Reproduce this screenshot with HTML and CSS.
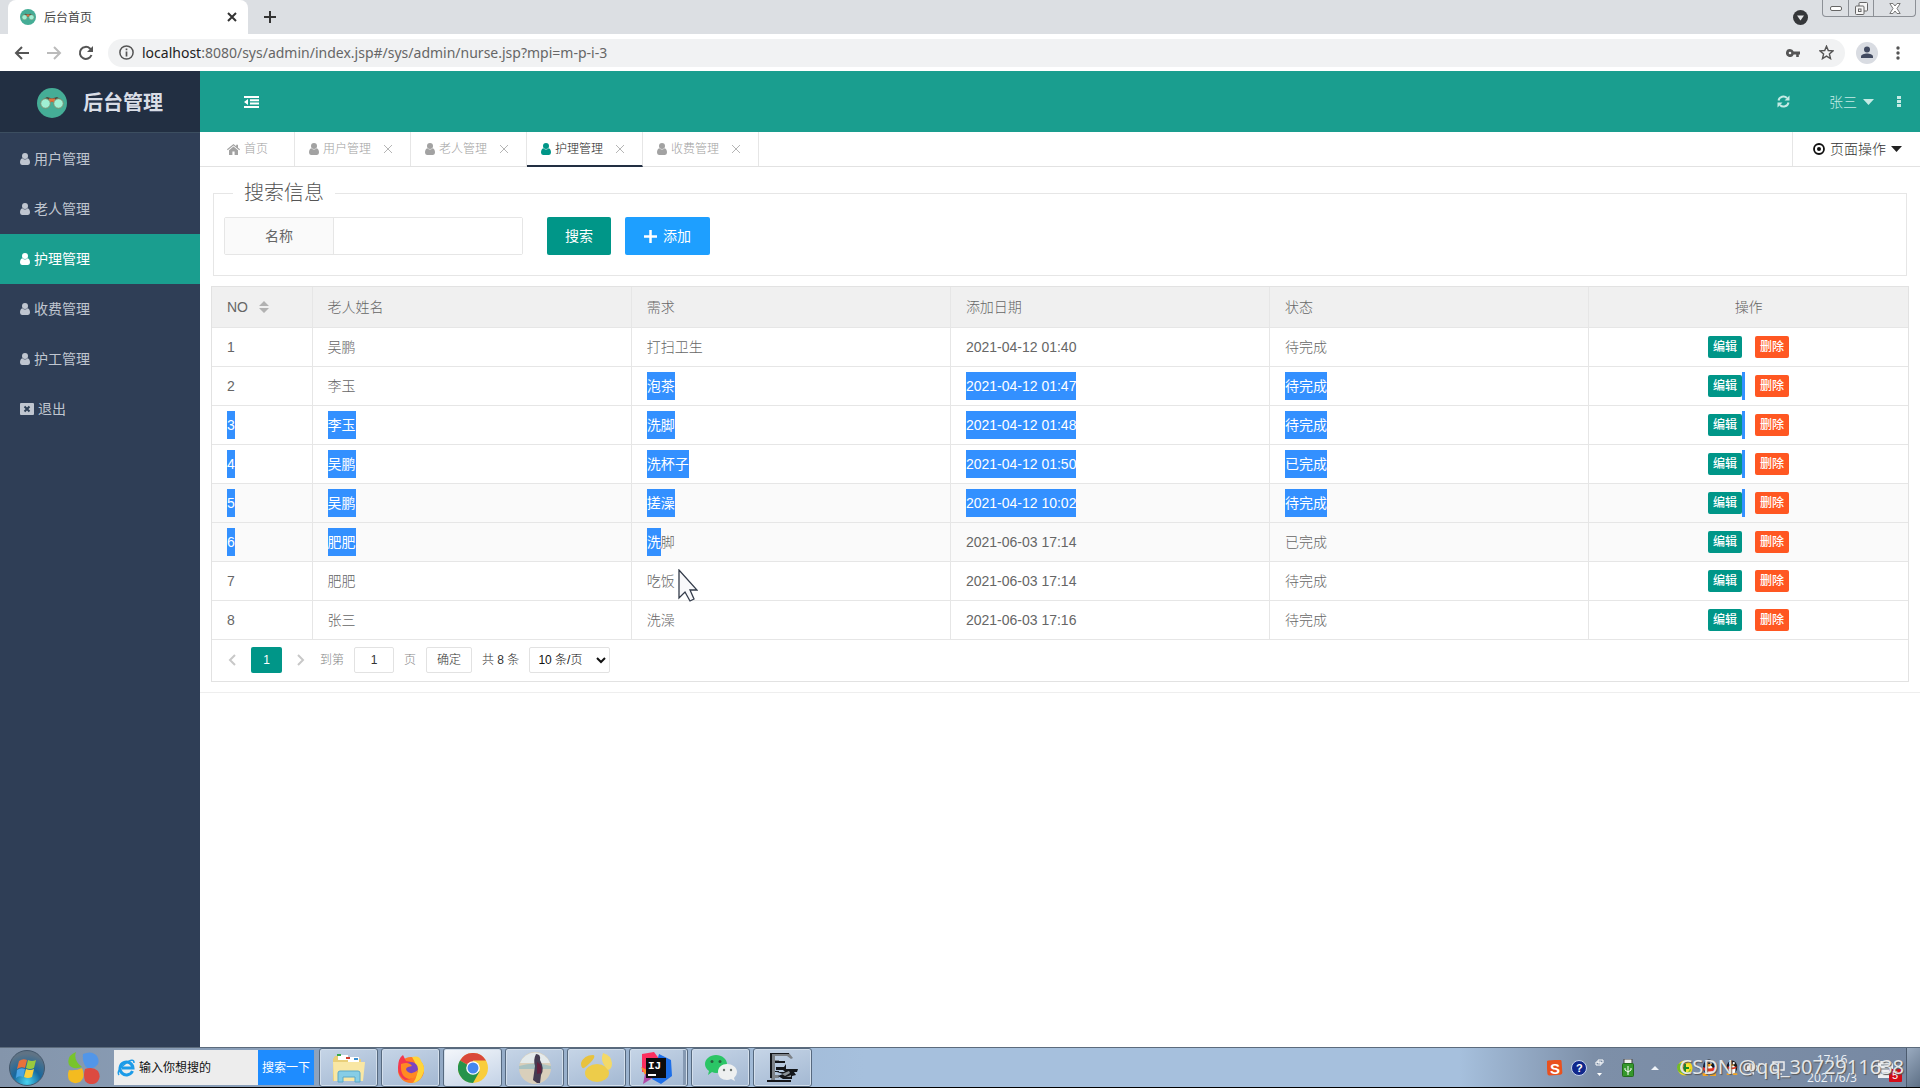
FILE: index.html
```html
<!DOCTYPE html>
<html lang="zh-CN">
<head>
<meta charset="utf-8">
<title>后台首页</title>
<link rel="stylesheet" href="styles.css">
</head>
<body>
<svg class="defs" aria-hidden="true">
  <symbol id="user" viewBox="0 0 10 12"><circle cx="5" cy="3" r="3"/><path d="M2.4 5.2Q5 7.6 7.6 5.2Q10 5.8 10 9.6Q10 12 8 12H2Q0 12 0 9.6Q0 5.8 2.4 5.2z"/></symbol>
  <symbol id="home" viewBox="0 0 13 11"><path d="M6.5 0 9.2 2.2V.8H11V3.700L13 5.300 12.300 6.200 6.500 1.500.7 6.200 0 5.300z"/><path d="M6.500 2.600 11 6.200V11H7.600V7.600H5.400V11H2V6.200z"/></symbol>
  <symbol id="logo" viewBox="0 0 30 30"><circle cx="15" cy="15" r="15" fill="#45ad96"/><path d="M5 12 10 9 15 10.500 20 9 25 12 20 14H10z" fill="#4a4a3e"/><path d="M12 10.500h6v5l-3-2-3 2z" fill="#e0713c"/><circle cx="8.500" cy="15.500" r="4.800" fill="#a0f0d4" stroke="#7d8f70"/><circle cx="21.500" cy="15.500" r="4.800" fill="#a0f0d4" stroke="#7d8f70"/></symbol>
  <symbol id="x" viewBox="0 0 10 10"><path d="M1 1 9 9M9 1 1 9" fill="none" stroke="currentColor"/></symbol>
</svg>

<div class="tabstrip">
  <div class="browser-tab">
    <svg class="favicon"><use href="#logo"/></svg>
    <span class="browser-title">后台首页</span>
    <button class="plain" aria-label="关闭标签页"><svg class="i10 thick"><use href="#x"/></svg></button>
  </div>
  <button class="plain newtab" aria-label="新标签页"><svg width="12" height="12" viewBox="0 0 12 12"><path d="M6 0V12M0 6H12" stroke="#333" stroke-width="2"/></svg></button>
  <span class="grow"></span>
  <svg class="tab-search" width="15" height="15" viewBox="0 0 15 15"><circle cx="7.500" cy="7.500" r="7.500" fill="#35373a"/><path d="M4 5.500h7L7.500 10.500z" fill="#e4e6e8"/></svg>
  <div class="window-buttons">
    <button class="plain" aria-label="最小化"><svg width="12" height="5" viewBox="0 0 12 5"><rect x=".5" y=".5" width="11" height="4" rx="1.500" fill="#fff" stroke="#666"/></svg></button>
    <button class="plain" aria-label="还原"><svg width="13" height="13" viewBox="0 0 13 13" fill="#f5f5f5" stroke="#666"><rect x="4" y=".5" width="8.500" height="8.500" rx="1"/><rect x=".5" y="4" width="8.500" height="8.500" rx="1"/><rect x="3.500" y="7" width="2.500" height="2.500"/></svg></button>
    <button class="plain wide" aria-label="关闭"><svg width="12" height="11" viewBox="0 0 12 11"><path d="M.8.500H4L6 3 8 .500h3.200L8 5.500l3.200 5H8L6 8l-2 2.500H.8L4 5.500z" fill="#fff" stroke="#777"/></svg></button>
  </div>
</div>

<div class="toolbar">
  <button class="plain" aria-label="后退"><svg width="16" height="14" viewBox="0 0 16 14"><path d="M8 1 2 7l6 6M2 7h13" fill="none" stroke="#555" stroke-width="2"/></svg></button>
  <button class="plain" aria-label="前进"><svg width="16" height="14" viewBox="0 0 16 14"><path d="M8 1l6 6-6 6M14 7H1" fill="none" stroke="#bbb" stroke-width="2"/></svg></button>
  <button class="plain" aria-label="刷新"><svg width="16" height="16" viewBox="0 0 16 16"><path d="M13.500 10A6 6 0 1 1 12 3.500L14 6" fill="none" stroke="#555" stroke-width="2"/><path d="M15 1v6H9z" fill="#555"/></svg></button>
  <div class="address">
    <svg width="15" height="15" viewBox="0 0 15 15"><circle cx="7.500" cy="7.500" r="6.600" fill="none" stroke="#555" stroke-width="1.500"/><path d="M7.500 6.500V11.500M7.500 3.500V5.200" stroke="#555" stroke-width="1.700"/></svg>
    <span class="url"><b>localhost</b>:8080/sys/admin/index.jsp#/sys/admin/nurse.jsp?mpi=m-p-i-3</span>
    <svg width="14" height="8" viewBox="0 0 14 8"><path fill="#555" fill-rule="evenodd" d="M4 0a4 4 0 0 1 3.700 2.600H14v2.800h-1.200V8h-2.600V5.400H7.700A4 4 0 1 1 4 0zM4 2.700a1.300 1.300 0 1 0 0 2.600 1.300 1.300 0 0 0 0-2.600z"/></svg>
    <svg class="star" width="15" height="15" viewBox="0 0 15 15"><path d="M7.500 1.200 9.300 5.500 14 5.900 10.400 9l1.100 4.600-4-2.500-4 2.500L4.600 9 1 5.900l4.700-.4z" fill="none" stroke="#555" stroke-width="1.400"/></svg>
  </div>
  <svg class="avatar" width="22" height="22" viewBox="0 0 22 22"><circle cx="11" cy="11" r="11" fill="#d9dce2"/><circle cx="11" cy="7.500" r="3" fill="#424a60"/><path d="M5 16v-1.500c0-2 3.500-3 6-3s6 1 6 3V16z" fill="#424a60"/></svg>
  <button class="plain" aria-label="菜单"><svg width="4" height="14" viewBox="0 0 4 14" fill="#555"><circle cx="2" cy="2" r="1.700"/><circle cx="2" cy="7" r="1.700"/><circle cx="2" cy="12" r="1.700"/></svg></button>
</div>

<div class="app">
  <aside class="sidebar">
    <div class="brand"><svg class="brand-logo"><use href="#logo"/></svg><span>后台管理</span></div>
    <nav>
      <a href="#user"><svg class="user"><use href="#user"/></svg>用户管理</a>
      <a href="#elder"><svg class="user"><use href="#user"/></svg>老人管理</a>
      <a href="#nurse" class="active"><svg class="user"><use href="#user"/></svg>护理管理</a>
      <a href="#fee"><svg class="user"><use href="#user"/></svg>收费管理</a>
      <a href="#worker"><svg class="user"><use href="#user"/></svg>护工管理</a>
      <a href="#exit"><svg class="exit" viewBox="0 0 14 12"><rect width="14" height="12" rx="1" fill="currentColor"/><path d="M4.500 3.500l5 5M9.500 3.500l-5 5" stroke="#2f4056" stroke-width="2"/></svg>退出</a>
    </nav>
  </aside>

  <main>
    <header class="topbar">
      <button class="plain" aria-label="收起菜单"><svg width="15" height="12" viewBox="0 0 15 12" fill="#fff"><path d="M0 0h15v2H0zM6 3.300h9v2H6zM6 6.600h9v2H6zM0 10h15v2H0zM4 3v6L0 6z"/></svg></button>
      <span class="grow"></span>
      <button class="plain" aria-label="刷新页面"><svg width="13" height="13" viewBox="0 0 13 13"><path d="M1.500 5.500A5 5 0 0 1 10 3M11.500 7.500A5 5 0 0 1 3 10" fill="none" stroke="#c5ebe5" stroke-width="2"/><path d="M12.500.5v5h-5zM.5 12.500v-5h5z" fill="#c5ebe5"/></svg></button>
      <button class="plain account">张三<svg width="11" height="6" viewBox="0 0 11 6"><path d="M0 0h11L5.500 6z" fill="#c5ebe5"/></svg></button>
      <button class="plain" aria-label="更多"><svg width="4" height="11" viewBox="0 0 4 11" fill="#c5ebe5"><path d="M0 0h4v3H0zM0 4h4v3H0zM0 8h4v3H0z"/></svg></button>
    </header>

    <div class="pagetabs">
      <a href="#home" class="pagetab home"><svg class="homeicon"><use href="#home"/></svg>首页</a>
      <a href="#user" class="pagetab"><svg class="user"><use href="#user"/></svg>用户管理<svg class="i10 close"><use href="#x"/></svg></a>
      <a href="#elder" class="pagetab"><svg class="user"><use href="#user"/></svg>老人管理<svg class="i10 close"><use href="#x"/></svg></a>
      <a href="#nurse" class="pagetab current"><svg class="user"><use href="#user"/></svg>护理管理<svg class="i10 close"><use href="#x"/></svg></a>
      <a href="#fee" class="pagetab"><svg class="user"><use href="#user"/></svg>收费管理<svg class="i10 close"><use href="#x"/></svg></a>
      <span class="grow"></span>
      <button class="plain page-ops"><svg width="12" height="12" viewBox="0 0 12 12"><circle cx="6" cy="6" r="5" fill="none" stroke="#111" stroke-width="1.800"/><circle cx="6" cy="6" r="2" fill="#111"/></svg>页面操作<svg width="11" height="6" viewBox="0 0 11 6"><path d="M0 0h11L5.500 6z" fill="#222"/></svg></button>
    </div>

    <section class="card">
      <fieldset class="search">
        <legend>搜索信息</legend>
        <form class="search-row">
          <div class="field"><label for="name">名称</label><input id="name" type="text"></div>
          <button type="button" class="btn">搜索</button>
          <button type="button" class="btn blue"><svg width="13" height="13" viewBox="0 0 13 13"><path d="M6.500 0V13M0 6.500H13" stroke="#fff" stroke-width="2.500"/></svg>添加</button>
        </form>
      </fieldset>

      <div class="grid">
        <table>
          <thead><tr><th class="no">NO<svg class="sort" viewBox="0 0 10 12"><path d="M0 5h10L5 0zM0 7h10l-5 5z" fill="#b2b2b2"/></svg></th><th>老人姓名</th><th>需求</th><th>添加日期</th><th>状态</th><th class="ops">操作</th></tr></thead>
          <tbody>
            <tr><td>1</td><td>吴鹏</td><td>打扫卫生</td><td>2021-04-12 01:40</td><td>待完成</td><td class="ops"><button class="mini">编辑</button><button class="mini del">删除</button></td></tr>
            <tr><td>2</td><td>李玉</td><td><mark>泡茶</mark></td><td><mark>2021-04-12 01:47</mark></td><td><mark>待完成</mark></td><td class="ops"><button class="mini">编辑</button><i class="caret"></i><button class="mini del">删除</button></td></tr>
            <tr><td><mark>3</mark></td><td><mark>李玉</mark></td><td><mark>洗脚</mark></td><td><mark>2021-04-12 01:48</mark></td><td><mark>待完成</mark></td><td class="ops"><button class="mini">编辑</button><i class="caret"></i><button class="mini del">删除</button></td></tr>
            <tr><td><mark>4</mark></td><td><mark>吴鹏</mark></td><td><mark>洗杯子</mark></td><td><mark>2021-04-12 01:50</mark></td><td><mark>已完成</mark></td><td class="ops"><button class="mini">编辑</button><i class="caret"></i><button class="mini del">删除</button></td></tr>
            <tr class="faint"><td><mark>5</mark></td><td><mark>吴鹏</mark></td><td><mark>搓澡</mark></td><td><mark>2021-04-12 10:02</mark></td><td><mark>待完成</mark></td><td class="ops"><button class="mini">编辑</button><i class="caret"></i><button class="mini del">删除</button></td></tr>
            <tr class="faint"><td><mark>6</mark></td><td><mark>肥肥</mark></td><td><mark>洗</mark>脚</td><td>2021-06-03 17:14</td><td>已完成</td><td class="ops"><button class="mini">编辑</button><button class="mini del">删除</button></td></tr>
            <tr><td>7</td><td>肥肥</td><td><span class="pointed">吃饭<svg class="pointer" viewBox="0 0 20 33"><path d="M1 1v28l6-6 5 9 4-2-4-9h7z" fill="#f8f8fa" stroke="#333b4a" stroke-width="1.300"/></svg></span></td><td>2021-06-03 17:14</td><td>待完成</td><td class="ops"><button class="mini">编辑</button><button class="mini del">删除</button></td></tr>
            <tr><td>8</td><td>张三</td><td>洗澡</td><td>2021-06-03 17:16</td><td>待完成</td><td class="ops"><button class="mini">编辑</button><button class="mini del">删除</button></td></tr>
          </tbody>
        </table>
        <div class="pager">
          <button class="plain" aria-label="上一页"><svg width="8" height="12" viewBox="0 0 8 12"><path d="M7 1 2 6l5 5" fill="none" stroke="#c8c8c8" stroke-width="2"/></svg></button>
          <span class="page-now">1</span>
          <button class="plain" aria-label="下一页"><svg width="8" height="12" viewBox="0 0 8 12"><path d="M1 1l5 5-5 5" fill="none" stroke="#c8c8c8" stroke-width="2"/></svg></button>
          <label class="dim jump" for="goto">到第</label>
          <input id="goto" type="text" value="1">
          <span class="dim">页</span>
          <button class="confirm">确定</button>
          <span class="total">共 8 条</span>
          <select aria-label="每页条数"><option>10 条/页</option></select>
        </div>
      </div>
    </section>
  </main>
</div>

<footer class="taskbar">
  <button class="plain orb" aria-label="开始"><svg width="36" height="36" viewBox="0 0 36 36"><defs><radialGradient id="orbfill" cx=".5" cy=".9" r=".8"><stop offset="0" stop-color="#4ad4f0"/><stop offset=".5" stop-color="#17689e"/><stop offset="1" stop-color="#5f7385"/></radialGradient></defs><circle cx="18" cy="18" r="17.500" fill="url(#orbfill)" stroke="#45586c"/><path d="M10 11q4-3 8-1l-2 8q-4-2-8 1z" fill="#e8713a"/><path d="M19 10q4 2 8 0l-2 8q-4 2-8 0z" fill="#9ac93d"/><path d="M8 20q4-3 8-1l-2 8q-4-2-7 1z" fill="#4aa4e4"/><path d="M17 19q4 2 8 0l-2 8q-4 2-8 0z" fill="#fbd03e"/></svg></button>
  <svg class="balls" width="32" height="32" viewBox="0 0 32 32"><path d="M15 2q9-4 14 2 4 7-2 11-6 3-9 0-4-5-3-13z" fill="#5296e8"/><path d="M17 17q8-3 13 2 4 7-2 12-7 3-11-2-2-6 0-12z" fill="#dc4a40"/><path d="M8 0q-3 8 6 15-9 3-13-2Q-2 4 8 0z" fill="#78c42c"/><path d="M1 18q7 1 13-2 4 9-2 14-7 3-11-2-2-5 0-10z" fill="#f4bb20"/></svg>
  <form class="quick">
    <svg width="18" height="18" viewBox="0 0 18 18"><path d="M15.500 12A6.500 6.500 0 1 1 16 9H5" fill="none" stroke="#1c9be8" stroke-width="3"/><path d="M2 16Q-1 12 8 5T17 4" fill="none" stroke="#1c9be8" stroke-width="1.500"/></svg>
    <input type="text" value="输入你想搜的" aria-label="搜索内容">
    <button type="button">搜索一下</button>
  </form>
  <div class="tasks">
    <button class="task" aria-label="资源管理器"><svg width="34" height="30" viewBox="0 0 34 30"><path d="M3 3h9l2 3h15v22H1V6z" fill="#e9cf79"/><path d="M6 2h10v5H6zM16 4h11v5H16z" fill="#fff"/><path d="M5 1h4v2H5z" fill="#3aa84b"/><path d="M14 4h4v2h-4z" fill="#d04030"/><path d="M22 5h4v2h-4z" fill="#3a8fd0"/><path d="M1 9h32l-2 19H2z" fill="#f9e7a4"/><path d="M6 29V20q0-2 2-2h18q2 0 2 2v9h-5v-5H11v5z" fill="#86cde6" stroke="#5aa8c8"/></svg></button>
    <button class="task" aria-label="Firefox"><svg width="32" height="32" viewBox="0 0 32 32"><circle cx="16" cy="18" r="13" fill="#ff7a26"/><path d="M17 5q8-2 9 4 5 6 2 13-3 8-10 9 6-8 3-16-1-6-4-10z" fill="#ffd43a"/><path d="M3 16Q3 6 8 3l3 6q8 0 11 7 0 12-12 12Q3 24 3 16z" fill="#f4384e"/><circle cx="16" cy="17" r="7" fill="#7b45c0"/><path d="M6 12q8-3 11 2l-4 1q-4 2 0 5 4 3 10-2-1 9-9 9-9-2-8-15z" fill="#ff8a22"/></svg></button>
    <button class="task lit" aria-label="Chrome"><svg width="30" height="30" viewBox="0 0 30 30"><circle cx="15" cy="15" r="15" fill="#f9cd3b"/><path d="M15 15 2 7.500A15 15 0 0 1 28 7.500H15z" fill="#d9483b"/><path d="M15 15 2 7.500A15 15 0 0 0 15 30l6.500-11.500z" fill="#25934b"/><circle cx="15" cy="15" r="6.800" fill="#fff"/><circle cx="15" cy="15" r="5.500" fill="#4587f0"/></svg></button>
    <button class="task" aria-label="照片"><svg width="32" height="32" viewBox="0 0 32 32"><circle cx="16" cy="16" r="16" fill="#d9cfbb"/><path d="M1 11a16 16 0 0 1 30 0z" fill="#e4eaeb"/><path d="M0 14q16-5 32 0v3H0z" fill="#a9c2c1"/><path d="M17 2q5 0 4 6 5 9 1 15l-1 8h-3l-4-3 2-14q-2-6 1-12z" fill="#443b50"/><path d="M18 10q6 3 4 11l-4 1z" fill="#62213e"/></svg></button>
    <button class="task" aria-label="Navicat"><svg width="32" height="30" viewBox="0 0 32 30"><ellipse cx="16" cy="20" rx="12" ry="9" fill="#edcc4a"/><path d="M0 10Q3 2 12 2q2 0 1 3-3 5-10 10Q0 16 0 10z" fill="#e8c23e"/><path d="M22 0q8 2 9 10 0 6-4 7-7-7-6-13z" fill="#f3d968"/></svg></button>
    <button class="task stacked" aria-label="IntelliJ IDEA"><svg width="32" height="32" viewBox="0 0 32 32"><path d="M2 2 14 0l6 8-4 12H2z" fill="#fb3060"/><path d="M19 2 31 8l1 16-11 8-9-5z" fill="#1e6fe8"/><path d="M1 15l8 4-2 8z" fill="#fb8c28"/><path d="M5 22h14L3 32z" fill="#b24aa8"/><path d="M6 6h20v20H6z" fill="#0c0c0e"/><text x="8" y="17" class="ij">IJ</text><path d="M8 22h8v2H8z" fill="#fff"/></svg></button>
    <button class="task" aria-label="微信"><svg width="32" height="28" viewBox="0 0 32 28"><path d="M11 1c6 0 11 4 11 9s-5 9-11 9q-2 0-4-1l-4 3 1-4q-4-3-4-7c0-5 5-9 11-9z" fill="#2bc566"/><path d="M22 10c5 0 10 3 10 8q0 3-3 6l1 3-4-2q-2 1-4 1c-5 0-9-3-9-8s4-8 9-8z" fill="#eef0f0"/><g fill="#26623e"><circle cx="7" cy="7.500" r="1.500"/><circle cx="15" cy="7.500" r="1.500"/></g><g fill="#6b7370"><circle cx="19" cy="16" r="1.200"/><circle cx="26" cy="16" r="1.200"/></g></svg></button>
    <button class="task" aria-label="录屏"><svg width="32" height="30" viewBox="0 0 32 30"><path d="M3 0h19l4 5-2 1-4-3H8v4h4v3H8v12h4v3H8v2h15v2H0v-2h4z" fill="#7d8288"/><path d="M3 1h2v24H3zM3 0h19v1H3zM8 8h10v2H8zM8 18h4v1H8zM0 27h24v2H0z" fill="#14161a"/><path d="M9 14h8l2-3v5h12l-1 3h-3l2 3-4 1v3h-9l-5-3 5-2-6-2h8l-2-2H9z" fill="#14161a"/><path d="M15 21l7-3 1 2-5 3zM19 24l5-2v2z" fill="#8b9298"/></svg></button>
  </div>
  <span class="grow"></span>
  <div class="tray">
    <svg width="16" height="16" viewBox="0 0 16 16"><rect width="15" height="15" rx="2" fill="#e9511f" transform="rotate(-4 8 8)"/><text x="3" y="14" class="sogou">S</text></svg>
    <svg width="16" height="16" viewBox="0 0 16 16"><circle cx="8" cy="8" r="7.500" fill="#10278c" stroke="#c7d4ea"/><text x="5" y="12" class="help">?</text></svg>
    <svg width="9" height="18" viewBox="0 0 9 18"><path d="M3 1h5v3H3zM1 3h5v3H1z" fill="#7789a3" stroke="#fff"/><path d="M2 14h5l-2.500 3z" fill="#fff"/></svg>
    <svg class="usb" width="12" height="18" viewBox="0 0 12 18"><rect x="2" width="8" height="5" fill="#eee" stroke="#444"/><rect x=".5" y="4.500" width="11" height="13" rx="1" fill="#35982c" stroke="#236b1e"/><path d="M6 7v9M3 9v2l3 2 3-2V9" fill="none" stroke="#fff"/></svg>
    <svg class="up" width="8" height="4" viewBox="0 0 8 4"><path d="M0 4h8L4 0z" fill="#eef2f7"/></svg>
    <svg width="16" height="16" viewBox="0 0 16 16"><circle cx="8" cy="8" r="7.500" fill="#f3d51e"/><path d="M2 12a7 7 0 0 1-1-8L8 2l6 8-4 5z" fill="#72bc28"/><circle cx="8" cy="8" r="5" fill="#f7e537"/><path d="M8 4v8M4 8h8" stroke="#168b25" stroke-width="2"/></svg>
    <svg width="16" height="17" viewBox="0 0 16 17"><ellipse cx="8" cy="8" rx="6" ry="7.500" fill="#181818"/><ellipse cx="8" cy="11" rx="4" ry="5" fill="#fff"/><path d="M2 8q6 3 12 0l1 3q-7 3-13 0z" fill="#e5361d"/><path d="M5 5h6L8 8zM1 14h6v3H2zM9 14h6v3H9z" fill="#f5a623"/><circle cx="6" cy="3.500" r="1.300" fill="#fff"/><circle cx="10" cy="3.500" r="1.300" fill="#fff"/></svg>
    <svg width="14" height="17" viewBox="0 0 16 17"><ellipse cx="8" cy="8" rx="6" ry="7.500" fill="#181818"/><ellipse cx="8" cy="11" rx="4" ry="5" fill="#fff"/><path d="M3 7q5 3 10 0v2q-5 3-10 0z" fill="#e5361d"/><path d="M5 5h6L8 7zM2 15h5v2H2zM9 15h5v2H9z" fill="#f5a623"/><circle cx="6" cy="3.500" r="1.300" fill="#fff"/><circle cx="10" cy="3.500" r="1.300" fill="#fff"/></svg>
    <svg width="16" height="14" viewBox="0 0 16 14"><path d="M0 4h3l4-4v14l-4-4H0z" fill="#eee"/><path d="M9 4q2 3 0 6M12 2q3 5 0 10" fill="none" stroke="#eee"/></svg>
    <svg width="14" height="16" viewBox="0 0 14 16"><path d="M2 2h11v8H2zM7 10v4M4 14h7" fill="none" stroke="#eee" stroke-width="1.500"/></svg>
    <div class="clock"><span>17:16</span><span>2021/6/3</span></div>
    <svg class="note" width="25" height="25" viewBox="0 0 25 25"><path d="M1 3h12l3 3v14H1z" fill="#eef0f2"/><path d="M4 7h8M4 11h9M4 15h9" stroke="#6c7682"/><rect x="12" y="11" width="13" height="13" rx="1" fill="#d20d18"/><text x="15" y="21" class="badge">5</text></svg>
    <button class="plain show-desktop" aria-label="显示桌面"></button>
    <span class="watermark">CSDN @qq_3072911638</span>
  </div>
</footer>
</body>
</html>
```
FILE: styles.css
```css
* { box-sizing: border-box; }
html, body { height: 100%; }
body {
  margin: 0;
  display: flex;
  flex-direction: column;
  font: 14px/20px "Liberation Sans", "Noto Sans CJK SC", sans-serif;
  color: #666;
  background: #fff;
}
button, input, select { font: inherit; color: inherit; }
svg { display: block; flex: none; }
a { color: inherit; text-decoration: none; }
.defs { position: absolute; width: 0; height: 0; }
.grow { flex: 1; }
.plain { border: 0; padding: 0; background: none; display: flex; align-items: center; justify-content: center; }
.i10 { width: 10px; height: 10px; }
.thick { stroke-width: 2px; color: #333; }
.user { width: 10px; height: 12px; fill: currentColor; }

/* browser frame */
.tabstrip { flex: none; height: 34px; display: flex; align-items: center; background: #dcdfe3; padding-left: 8px; }
.browser-tab { width: 240px; height: 34px; display: flex; align-items: center; padding: 0 11px 0 12px; background: #fff; border-radius: 8px 8px 0 0; }
.favicon { width: 16px; height: 16px; }
.browser-title { flex: 1; margin-left: 8px; padding-top: 2px; font-size: 12px; color: #444; }
.newtab { margin-left: 16px; }
.tab-search { margin-right: 14px; }
.window-buttons { align-self: flex-start; display: flex; height: 17px; margin-right: 4px; border: 1px solid #8c9096; border-top: 0; border-radius: 0 0 4px 4px; }
.window-buttons button { width: 25px; }
.window-buttons button + button { border-left: 1px solid #8c9096; }
.window-buttons .wide { width: 42px; }
.toolbar { flex: none; height: 37px; display: flex; align-items: center; gap: 16px; padding: 0 20px 0 14px; background: #fff; }
.address { flex: 1; height: 28px; display: flex; align-items: center; gap: 8px; margin: 0 -5px 0 -2px; padding: 0 11px; border-radius: 14px; background: #f1f2f3; }
.url { flex: 1; font: 14px/20px "Noto Sans", "Open Sans", sans-serif; color: #666; }
.url b { font-weight: 400; color: #222; }
.star { margin-left: 11px; }
.avatar { margin-right: 2px; }

/* application */
.app { flex: 1; min-height: 0; display: flex; }
.sidebar { flex: none; width: 200px; background: #2f3e56; color: #c0c6d0; }
.brand { height: 62px; display: flex; align-items: center; gap: 16px; padding: 2px 0 0 37px; background: #222f42; border-bottom: 1px solid #3c4e60; font-size: 20px; font-weight: 700; color: #d9dde6; }
.brand-logo { width: 30px; height: 30px; }
.sidebar nav { padding-top: 1px; }
.sidebar nav a { height: 50px; display: flex; align-items: center; gap: 4px; padding-left: 20px; }
.sidebar nav .active { background: #1a9e8f; color: #fff; }
.exit { width: 14px; height: 12px; }
main { flex: 1; min-width: 0; }
.topbar { height: 61px; display: flex; align-items: center; padding: 0 19px 0 44px; background: #1a9e8f; color: #c5ebe5; }
.account { gap: 6px; margin: 0 23px 0 39px; font-weight: 300; }
.pagetabs { height: 35px; display: flex; border-bottom: 1px solid #e2e2e2; font-size: 12px; color: #a2a2a2; }
.pagetab { box-sizing: content-box; width: 101px; display: flex; align-items: center; gap: 4px; padding-left: 14px; border-right: 1px solid #e6e6e6; font-weight: 300; }
.home { width: 67px; padding-left: 27px; }
.homeicon { width: 13px; height: 11px; fill: currentColor; }
.close { margin-left: 8px; color: #b5b5b5; }
.current { color: #222; border-bottom: 2px solid #222f42; margin-bottom: -1px; }
.current .user { fill: #009688; }
.page-ops { gap: 5px; padding: 0 18px 0 20px; border-left: 1px solid #e6e6e6; font-size: 14px; font-weight: 300; color: #333; }
.card { padding: 14px 11px 10px; border-bottom: 1px solid #eee; }
.search { margin: 0 2px 10px; padding: 12px 10px 20px; border: 1px solid #e6e6e6; min-width: 0; }
.search legend { margin-left: 9px; padding: 0 11px; font-size: 20px; line-height: 24px; font-weight: 300; color: #555; }
.search-row { display: flex; align-items: center; }
.field { display: flex; width: 299px; height: 38px; margin-right: 24px; border: 1px solid #e6e6e6; border-radius: 2px; }
.field label { width: 109px; line-height: 36px; text-align: center; background: #fafafa; border-right: 1px solid #e6e6e6; }
.field input { flex: 1; min-width: 0; border: 0; padding: 0 10px; outline: 0; }
.btn { height: 38px; display: flex; align-items: center; gap: 6px; padding: 0 18px; margin-right: 14px; border: 0; border-radius: 2px; background: #009688; color: #fff; }
.blue { padding: 0 19px; background: #1e9fff; }
.grid { border: 1px solid #e2e2e2; }
table { width: 100%; border-collapse: collapse; table-layout: fixed; }
th, td { height: 39px; padding: 0 0 0 15px; text-align: left; font-weight: 300; border-right: 1px solid #e6e6e6; border-bottom: 1px solid #e6e6e6; }
th { height: 40px; background: #f0f0f0; }
th:last-child, td:last-child { border-right: 0; }
.no { width: 100px; font-weight: 400; }
.sort { display: inline-block; width: 10px; height: 12px; margin-left: 11px; vertical-align: -1px; }
.faint td { background: #fafafa; }
mark { display: inline-block; line-height: 28px; background: #3390ff; color: #fff; font-weight: 400; }
.ops { padding: 0; text-align: center; }
td.ops { font-size: 0; }
.mini { width: 34px; height: 22px; padding: 0; border: 0; border-radius: 2px; background: #009688; color: #fff; font-size: 12px; font-weight: 500; vertical-align: middle; }
.del { margin-left: 13px; background: #ff5722; }
.caret { display: inline-block; width: 3px; height: 28px; margin-right: -3px; background: #3390ff; vertical-align: middle; }
.pointed { position: relative; }
.pointer { position: absolute; left: 31px; top: -4px; width: 20px; height: 33px; }
.pager { height: 41px; display: flex; align-items: center; gap: 10px; padding-left: 16px; font-size: 12px; }
.page-now { width: 31px; line-height: 26px; margin: 0 5px; text-align: center; border-radius: 2px; background: #009688; color: #fff; }
.dim { font-weight: 300; color: #888; }
.jump { margin-left: 5px; }
.total { font-weight: 300; color: #333; }
.pager input, .confirm, .pager select { height: 26px; border: 1px solid #e2e2e2; border-radius: 2px; background: #fff; color: #333; font-weight: 300; }
.pager input { width: 40px; padding: 0; text-align: center; }
.confirm { width: 46px; padding: 0; }
.pager select { width: 81px; padding: 0 4px; color: #111; }

/* desktop taskbar */
.taskbar { flex: none; height: 41px; display: flex; align-items: center; background: linear-gradient(90deg, #8495ab 0, #8ea4bf 18%, #a6c0dd 45%, #a6c0dd 76%, #7d8fa8 83%, #7789a3 100%); border-top: 1px solid #5c6b7c; border-bottom: 1px solid #000; }
.orb { margin: 0 23px 0 9px; }
.quick { height: 35px; display: flex; align-items: center; margin: 0 5px 0 14px; padding-left: 3px; background: #ededed; font-size: 14px; }
.quick input { width: 123px; padding: 0 0 0 4px; border: 0; background: none; color: #111; font-size: 12px; }
.quick button { width: 56px; height: 35px; padding: 0; border: 0; background: #1e8cff; color: #fff; font-size: 12px; }
.tasks { display: flex; gap: 3px; align-self: stretch; }
.task { width: 59px; display: flex; align-items: center; justify-content: center; padding: 0; border: 1px solid #56697f; border-radius: 3px; background: linear-gradient(160deg, #c6d5e7, #a3b8d2); box-shadow: inset 0 0 0 1px #d3dfec; }
.lit { background: linear-gradient(160deg, #f4f7fb, #c3d2e6); }
.stacked { padding-right: 5px; box-shadow: inset 0 0 0 1px #d3dfec, inset -4px 0 0 #8599b2; }
.ij { font: bold 11px "Liberation Mono", monospace; fill: #fff; }
.tray { position: relative; align-self: stretch; display: flex; align-items: center; gap: 8px; color: #eef2f6; }
.sogou { font: bold 15px "Liberation Sans", sans-serif; fill: #fff; }
.help { font: bold 11px "Liberation Sans", sans-serif; fill: #fff; }
.badge { font: 11px "Liberation Sans", sans-serif; fill: #fff; }
.usb { margin-left: 10px; }
.up { margin: 0 10px 0 9px; }
.clock { display: flex; flex-direction: column; align-items: center; width: 54px; margin: 0 10px 0 12px; padding-top: 3px; font: 12px/18px "Open Sans", sans-serif; }
.note { margin: 5px -4px 0 0; }
.show-desktop { align-self: stretch; width: 14px; border-left: 1px solid #4c5b6e; background: linear-gradient(135deg, #9aabc0, #5e7086); }
.watermark { position: absolute; right: 16px; top: 6px; font: 20px/26px "Noto Sans", sans-serif; color: #e4e6e8; text-shadow: 1px 1px 1px #555; white-space: nowrap; }
```
